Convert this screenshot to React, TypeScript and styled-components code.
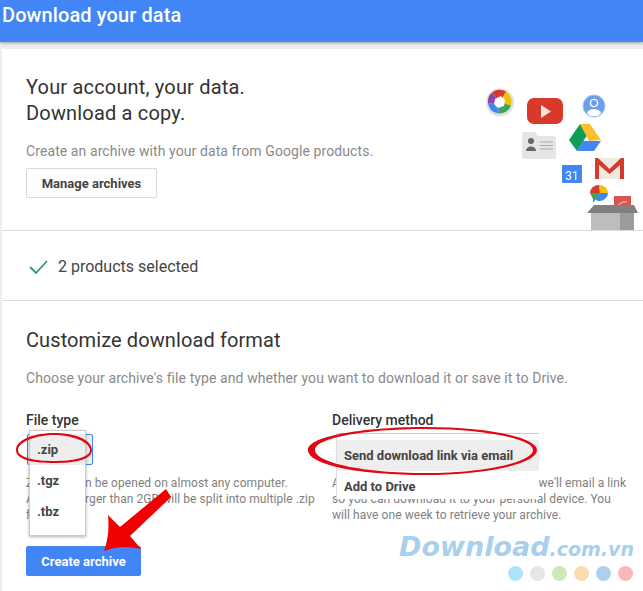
import React from 'react';
import styled, { createGlobalStyle } from 'styled-components';

const GlobalStyle = createGlobalStyle`
    html, body {
        margin: 0;
        padding: 0;
        background: #fff;
    }
    body {
        font-family: Roboto, 'Liberation Sans', sans-serif;
        color: #333;
    }
`;

const Page = styled.div`
    position: relative;
    width: 643px;
    height: 591px;
    overflow: hidden;
    background: #eee;
`;

const Header = styled.header`
    height: 42px;
    padding-left: 2px;
    background: #4285f4;
    box-shadow: 0 1px 3px rgba(0, 0, 0, 0.35);
    color: #fff;
    font-size: 20px;
    font-weight: 500;
    line-height: 30px;
    letter-spacing: 0.1px;
`;

const Card = styled.main`
    margin: 7px 0 0 2px;
    height: 542px;
    background: #fff;
`;

const Hero = styled.section`
    display: flex;
    justify-content: space-between;
    align-items: flex-end;
    height: 181px;
    padding-left: 24px;
    border-bottom: 1px solid #dcdcdc;
`;

const HeroText = styled.div`
    align-self: flex-start;
    padding-top: 25px;
`;

const Title = styled.h1`
    margin: 0;
    font-size: 20px;
    font-weight: 400;
    line-height: 26px;
    letter-spacing: 0.18px;
    color: #333;
`;

const Lead = styled.p<{ $top: number }>`
    margin: ${(p) => p.$top}px 0 0;
    font-size: 14px;
    line-height: 18px;
    letter-spacing: 0.09px;
    color: #8a8a8a;
`;

const Button = styled.button<{ $primary?: boolean }>`
    display: block;
    height: 30px;
    border-radius: 2px;
    border: 1px solid ${(p) => (p.$primary ? '#4285f4' : '#d9d9d9')};
    background: ${(p) => (p.$primary ? '#4285f4' : '#fff')};
    color: ${(p) => (p.$primary ? '#fff' : '#444')};
    font-family: inherit;
    font-size: 13px;
    font-weight: 700;
    padding: 0;
`;

const ManageButton = styled(Button)`
    width: 131px;
    margin-top: 8px;
`;

const Illustration = styled.svg`
    display: block;
    filter: blur(0.4px);
`;

const Summary = styled.section`
    display: flex;
    align-items: center;
    gap: 10px;
    height: 67px;
    padding: 2px 0 0 26px;
    border-bottom: 1px solid #dcdcdc;
    font-size: 16px;
    color: #444;
`;

const Customize = styled.section`
    padding: 26px 0 0 24px;
`;

const SectionTitle = styled.h2`
    margin: 0;
    font-size: 20px;
    font-weight: 400;
    line-height: 26px;
    letter-spacing: 0.1px;
    color: #333;
`;

const Columns = styled.div`
    display: grid;
    grid-template-columns: 306px 296px;
    margin-top: 24px;
`;

const Field = styled.div`
    position: relative;
`;

const Label = styled.div`
    font-size: 14px;
    font-weight: 500;
    line-height: 18px;
    color: #333;
`;

const SelectBox = styled.div<{ $hidden?: boolean }>`
    height: 31px;
    margin-top: 5px;
    width: 66px;
    margin-left: 1px;
    box-sizing: border-box;
    border: 1px solid #4285f4;
    border-radius: 2px;
    background: #eee;
    visibility: ${(p) => (p.$hidden ? 'hidden' : 'visible')};
`;

const Note = styled.p`
    margin: 10px 0 0;
    font-size: 12px;
    line-height: 16px;
    letter-spacing: 0.07px;
    color: #808080;
`;

const Menu = styled.ul<{ $left: number; $top: number; $width: number; $flat?: boolean }>`
    position: absolute;
    left: ${(p) => p.$left}px;
    top: ${(p) => p.$top}px;
    width: ${(p) => p.$width}px;
    margin: 0;
    padding: ${(p) => (p.$flat ? '6px 0 0' : '3px 0 0')};
    list-style: none;
    box-sizing: border-box;
    background: #fff;
    ${(p) =>
        p.$flat
            ? 'border-top: 1px solid #ccc; border-left: 1px solid #ddd; height: 66px;'
            : 'border: 1px solid #ccc; box-shadow: 0 1px 3px rgba(0, 0, 0, 0.3); height: 106px;'}
`;

const MenuItem = styled.li<{ $active?: boolean; $height: number }>`
    height: ${(p) => p.$height}px;
    padding-left: 7px;
    background: ${(p) => (p.$active ? '#eee' : 'transparent')};
    font-size: 13px;
    font-weight: 700;
    line-height: ${(p) => p.$height}px;
    color: #444;
`;

const CreateButton = styled(Button)`
    width: 115px;
    margin-top: 23px;
`;

const Annotations = styled.svg`
    position: absolute;
    inset: 0;
    pointer-events: none;
`;

const Watermark = styled.div`
    position: absolute;
    left: 399px;
    top: 531px;
    font-family: 'DejaVu Sans', sans-serif;
    font-style: italic;
    font-weight: 700;
    font-size: 27px;
    line-height: 32px;
    color: #a8cfec;
    white-space: nowrap;
`;

const WatermarkSuffix = styled.span`
    font-size: 19px;
`;

const Dots = styled.div`
    position: absolute;
    left: 508px;
    top: 566px;
    display: flex;
    gap: 7px;
`;

const Dot = styled.span<{ $color: string }>`
    width: 15px;
    height: 15px;
    border-radius: 50%;
    background: ${(p) => p.$color};
`;

const dotColors = ['#b0e3fa', '#e6e6e6', '#cfe8b8', '#fbdcb0', '#aed0ec', '#f9b8bd'];

const ProductArt: React.FC = () => (
    <Illustration width="173" height="151" viewBox="470 80 173 151">
        {/* picasa */}
        <circle cx="500" cy="103.5" r="14" fill="#e0e0e0" />
        <path d="M500 103.5 L492 93.5 A12 12 0 0 1 506 92.5 Z" fill="#d8392b" />
        <path d="M500 103.5 L506 92.5 A12 12 0 0 1 511 106.5 Z" fill="#f4c20d" />
        <path d="M500 103.5 L511 106.5 A12 12 0 0 1 498 114.5 Z" fill="#3aa757" />
        <path d="M500 103.5 L498 114.5 A12 12 0 0 1 488 104.5 Z" fill="#4285f4" />
        <path d="M500 103.5 L488 104.5 A12 12 0 0 1 492 93.5 Z" fill="#8e44ad" />
        <path d="M495 100 L501 97 L505 101 L504 107 L498 109 L494 105 Z" fill="#fff" />
        {/* youtube */}
        <rect x="527" y="99" width="36" height="26" rx="7" fill="#d8392b" />
        <path d="M541 106 L551 112.5 L541 119 Z" fill="#f4e4dc" />
        {/* profile */}
        <circle cx="594" cy="107" r="11" fill="#6d9eeb" stroke="#a9c4f3" strokeWidth="1" />
        <circle cx="594" cy="104" r="3.6" fill="none" stroke="#fff" strokeWidth="1.4" />
        <path d="M587 114 C588 109 600 109 601 114 L598 117 L590 117 Z" fill="#fff" />
        {/* contacts */}
        <path d="M522 135 Q522 133 524 133 L535 133 L538 137 L554 137 Q556 137 556 139 L556 158 Q556 160 554 160 L524 160 Q522 160 522 158 Z" fill="#e5e5e5" />
        <circle cx="531" cy="142" r="3" fill="#666" />
        <path d="M526 152 C526 146 536 146 536 152 Z" fill="#666" />
        <path d="M540 143 H553 M540 146.5 H553 M540 150 H553" stroke="#aaa" strokeWidth="1.2" />
        {/* drive */}
        <path d="M580 125 L569 141 L577 152 L591 130 Z" fill="#0f9d58" />
        <path d="M580 125 L590 125 L601 141 L589 142 Z" fill="#fbc02d" />
        <path d="M583 142 L601 142 L594 152 L577 152 Z" fill="#4285f4" />
        {/* calendar */}
        <rect x="562" y="166" width="20" height="18" rx="1" fill="#4285f4" />
        <text x="572" y="181" textAnchor="middle" fontFamily="Roboto, sans-serif" fontSize="12" fill="#fff">31</text>
        {/* gmail */}
        <rect x="595" y="159" width="29" height="21" fill="#eeeae2" />
        <path d="M595 180 V159 H598 L609.5 170 L621 159 H624 V180 H620 V166 L609.5 175 L599 166 V180 Z" fill="#d8392b" />
        {/* chat bubble */}
        <path d="M599 186 A9 8 0 0 1 608 194 L600 194 Z" fill="#f4c20d" />
        <path d="M590 194 A9 8 0 0 1 599 186 L600 194 Z" fill="#d8392b" />
        <path d="M590 194 L600 194 L593 204 L593 200 Z" fill="#3aa757" />
        <path d="M600 194 L608 194 A9 8 0 0 1 598 202 L595 200 Z" fill="#4285f4" />
        {/* rss and box */}
        <rect x="614" y="197" width="17" height="13" fill="#d9534f" />
        <path d="M617 209 A9 9 0 0 1 627 203" fill="none" stroke="#f0a49c" strokeWidth="1.5" />
        <path d="M587 214 L594 206 L634 206 L638 214 Z" fill="#808080" />
        <rect x="591" y="214" width="29" height="17" fill="#bdbdbd" />
        <rect x="620" y="214" width="14" height="17" fill="#9c9c9c" />
    </Illustration>
);

const CheckIcon: React.FC = () => (
    <svg width="20" height="16" viewBox="0 0 20 16">
        <path d="M2 8 L8 14 L19 2" fill="none" stroke="#2a9d68" strokeWidth="1.8" />
    </svg>
);

const App: React.FC = () => {
    return (
        <Page>
            <GlobalStyle />
            <Header>Download your data</Header>
            <Card>
                <Hero>
                    <HeroText>
                        <Title>
                            Your account, your data.
                            <br />
                            Download a copy.
                        </Title>
                        <Lead $top={16}>Create an archive with your data from Google products.</Lead>
                        <ManageButton>Manage archives</ManageButton>
                    </HeroText>
                    <ProductArt />
                </Hero>
                <Summary>
                    <CheckIcon />
                    2 products selected
                </Summary>
                <Customize>
                    <SectionTitle>Customize download format</SectionTitle>
                    <Lead $top={16}>Choose your archive's file type and whether you want to download it or save it to Drive.</Lead>
                    <Columns>
                        <Field>
                            <Label>File type</Label>
                            <SelectBox />
                            <Note>
                                Zip files can be opened on almost any computer.
                                <br />
                                Archives larger than 2GB will be split into multiple .zip
                                <br />
                                files.
                            </Note>
                            <Menu $left={3} $top={19} $width={57}>
                                <MenuItem $active $height={31}>.zip</MenuItem>
                                <MenuItem $height={31}>.tgz</MenuItem>
                                <MenuItem $height={31}>.tbz</MenuItem>
                            </Menu>
                        </Field>
                        <Field>
                            <Label>Delivery method</Label>
                            <SelectBox $hidden />
                            <Note>
                                As soon as your archive is completed, we'll email a link
                                <br />
                                so you can download it to your personal device. You
                                <br />
                                will have one week to retrieve your archive.
                            </Note>
                            <Menu $flat $left={4} $top={22} $width={203}>
                                <MenuItem $active $height={31}>Send download link via email</MenuItem>
                                <MenuItem $height={31}>Add to Drive</MenuItem>
                            </Menu>
                        </Field>
                    </Columns>
                    <CreateButton $primary>Create archive</CreateButton>
                </Customize>
            </Card>
            <Watermark>
                Download<WatermarkSuffix>.com.vn</WatermarkSuffix>
            </Watermark>
            <Dots>
                {dotColors.map((color) => (
                    <Dot key={color} $color={color} />
                ))}
            </Dots>
            <Annotations width="643" height="591" viewBox="0 0 643 591">
                <path fillRule="evenodd" fill="#e30613" d="M16 450 C16 439 36 433 54 433 C76 433 92 440 92 450 C92 460 74 463 54 463 C34 463 16 460 16 450 Z M18 450 C18 458 36 461 54 461 C72 461 90 458 90 450 C90 442 72 435 54 435 C36 435 18 442 18 450 Z" />
                <path fillRule="evenodd" fill="#e30613" d="M308 450 C308 435 370 427 425 427 C490 427 537 438 537 450 C537 465 480 475 425 475 C360 475 308 465 308 450 Z M315 450 C315 463 365 473 425 473 C485 473 533 462 533 450 C533 439 485 429 425 429 C365 429 315 438 315 450 Z" />
                <path fill="#f00000" d="M166 489 L171 497 L130 536 L141 549 Q122 544 104 551 Q110 535 108 515 L120 527 Z" />
            </Annotations>
        </Page>
    );
};

export default App;
